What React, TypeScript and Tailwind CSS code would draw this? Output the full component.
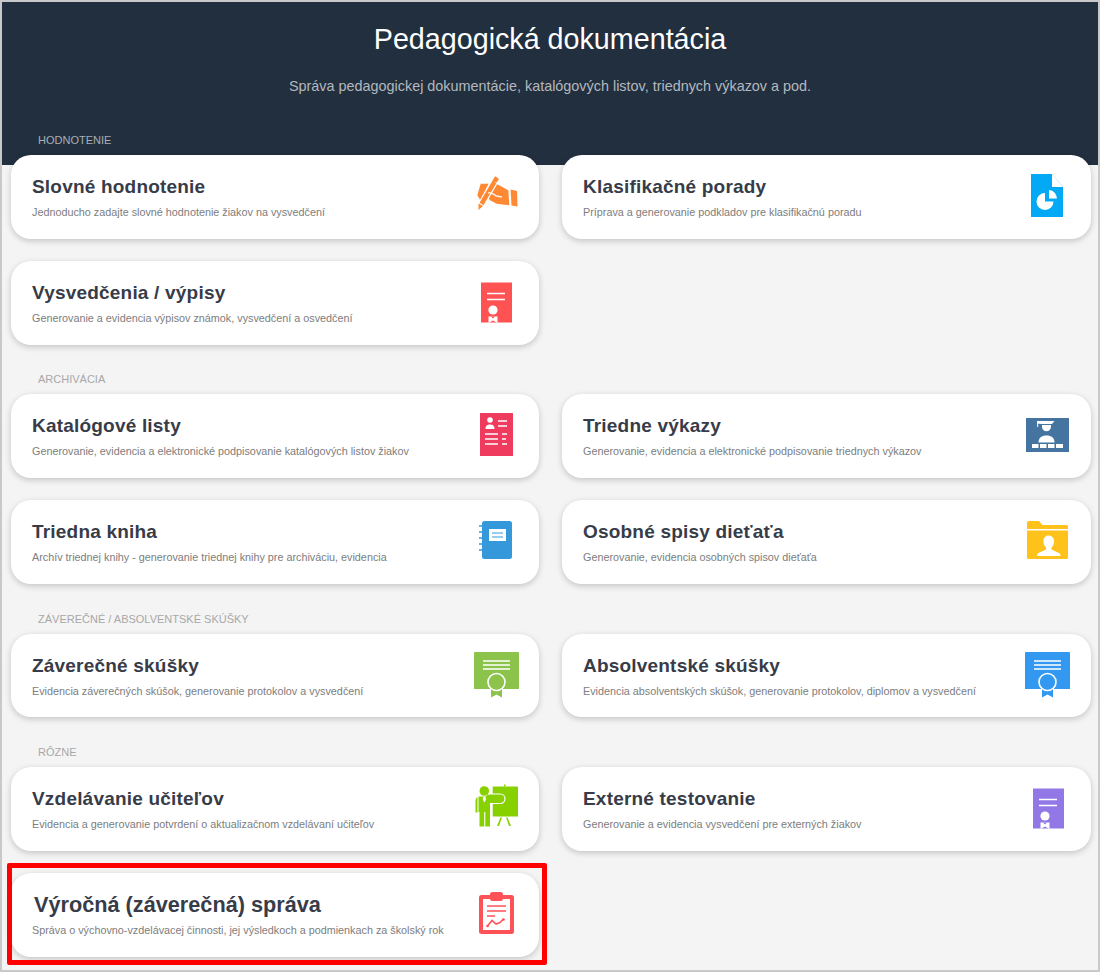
import React from "react";

const Doc = ({ c }: { c: string }) => (
  <>
    <path d="M14 9.500h31v40H14z" fill={c} />
    <path d="M20 20.500h18M20 26.500h18" stroke="#fff" strokeWidth="1.700" />
    <circle cx="26" cy="37" r="4.600" fill="#fff" />
    <path d="M21.500 43.500h9v6.500l-4.500-2.500-4.500 2.500z" fill="#fff" />
    <path d="M24 43.500h4l-2 2z" fill={c} />
  </>
);

const Cert = ({ c, x }: { c: string; x: number }) => (
  <g transform={`translate(${x} 0)`}>
    <path d="M0 7a1 1 0 0 1 1-1h43a1 1 0 0 1 1 1v36H0z" fill={c} />
    <path d="M9 15h27M9 19h27M9 23h27" stroke="#fff" strokeWidth="1.300" />
    <path d="M17 43h11v8.500l-5.500-3-5.500 3z" fill={c} />
    <circle cx="22.500" cy="36" r="8.500" fill={c} stroke="#fff" strokeWidth="1.600" />
    <path d="M16.500 43v-1M28.500 43v-1" stroke="#fff" strokeWidth="1" />
  </g>
);

const icons: Record<string, React.ReactNode> = {
  hand: (
    <>
      <path d="M26.300 15 41.300 23.300 42.300 38.300 29.700 36.700 23 33.300 18 26.700 21.300 21z" fill="#ff8833" />
      <path d="M43.500 22.500 50 24 50.500 39.500 44.500 38.500z" fill="#ff8833" />
      <path d="M13.700 16.700 21.500 16.700 15.500 29 18.500 33 14.700 35.500 10.300 28.300z" fill="#ff8833" />
      <path d="M30 10.500 14 38" stroke="#fff" strokeWidth="7" />
      <path d="M30 10.500 14.500 37" stroke="#ff8833" strokeWidth="4.500" />
      <path d="M28.500 15.500l3 1.800" stroke="#fff" strokeWidth="1" />
      <path d="M11.500 36.500 16 39 11.500 43z" fill="#ff8833" />
      <path d="M21 26c3-1 7 2 8 3l6 1" stroke="#fff" strokeWidth="1.300" fill="none" />
    </>
  ),
  chart: (
    <>
      <path d="M12 7h21l11 13v30H12z" fill="#03a9f4" />
      <path d="M33 7v13h11z" fill="#fff" />
      <path d="M26 26v8.500h8.500A8.500 8.500 0 1 1 26 26z" fill="#fff" />
      <path d="M30 23a8.500 8.500 0 0 1 8 8.500h-8z" fill="#fff" />
    </>
  ),
  docRed: <Doc c="#ff5252" />,
  catalog: (
    <>
      <rect x="13" y="7" width="33" height="43" rx="0.500" fill="#ef3b5e" />
      <circle cx="23" cy="14" r="2.800" fill="#fff" />
      <path d="M18.500 23c0-3.500 2-4.500 4.500-4.500s4.500 1 4.500 4.500z" fill="#fff" />
      <path d="M31 15h9M31 20h9M18 28h13M18 33h13M18 38h13M35 28h5M35 33h4M35 38h5" stroke="#fff" strokeWidth="1.700" />
    </>
  ),
  book: (
    <>
      <rect x="15" y="9" width="30" height="38" rx="2.500" fill="#3498db" />
      <path d="M12 14h6M12 20h6M12 26h6M12 32h6M12 38h6" stroke="#3498db" strokeWidth="1.500" />
      <rect x="22" y="17" width="17" height="12" fill="#fff" />
      <path d="M25 21h11M25 25h11" stroke="#3498db" strokeWidth="1.200" />
    </>
  ),
  teacher: (
    <>
      <rect x="7" y="12" width="43" height="34" rx="0.500" fill="#44749f" />
      <path d="M18 15h17.500l-2.500 3H22.500l-4.500-.5z" fill="#fff" />
      <path d="M18.700 15.500V21" stroke="#fff" strokeWidth="1" />
      <path d="M23 19h9v1.700a4.500 4.500 0 0 1-9 0z" fill="#fff" />
      <path d="M19.500 36.500c0-4.500 3-7 8-7s8 2.500 8 7z" fill="#fff" />
      <path d="M13 38h6.500v4H13zM21 38h6.500v4H21zM29 38h6.500v4H29zM37 38h7v4h-7z" fill="#fff" />
    </>
  ),
  folder: (
    <>
      <path d="M8 10.500A1.500 1.500 0 0 1 9.500 9H20l3.500 4H47.500A1.500 1.500 0 0 1 49 14.500V17H8z" fill="#ffc21a" />
      <path d="M8 18.500h41V45.500a1.500 1.500 0 0 1-1.500 1.500h-38A1.500 1.500 0 0 1 8 45.500z" fill="#ffc21a" />
      <path d="M29.500 23.500c3.500 0 5.500 2.500 5.500 6 0 2.500-1 4.500-2.500 6v2l7.500 3.500c1 .5 1.500 1.500 1.500 3H18c0-1.500.5-2.500 1.500-3l7.500-3.500v-2c-1.500-1.500-2.500-3.500-2.500-6 0-3.500 2-6 5-6z" fill="#fff" />
    </>
  ),
  certGreen: <Cert c="#8cc34a" x={7} />,
  certBlue: <Cert c="#3399f0" x={6} />,
  presenter: (
    <>
      <rect x="25.700" y="7.500" width="25.300" height="30" fill="#88d100" />
      <rect x="37" y="5.500" width="1.500" height="2" fill="#88d100" />
      <rect x="18" y="15" width="20" height="9.500" rx="4.700" fill="#88d100" stroke="#fff" strokeWidth="1.200" />
      <circle cx="17.300" cy="12" r="4.800" fill="#88d100" />
      <path d="M11.500 17.500H23V47.500h-4.700V33h-1.100v14.500H12.500V33h-1zM8.500 21.500A4 4 0 0 1 10.500 18V33.500H8.500z" fill="#88d100" />
      <path d="M16.500 17.500h1.800l.7 3-1.600 3-1.600-3z" fill="#fff" />
      <path d="M30 47l3.500-8.500H35L32 47zM44 47l-3.500-8.500H39L42 47z" fill="#88d100" />
    </>
  ),
  docPurple: <Doc c="#9178e6" />,
  clip: (
    <>
      <rect x="12" y="10" width="35" height="39" rx="2.500" fill="#ff5257" />
      <rect x="16" y="14" width="27" height="31" fill="#fff" />
      <rect x="23" y="7" width="13" height="9" rx="2.500" fill="#ff5257" />
      <path d="M20 21h19M20 26h19M20 31h8" stroke="#ff5257" strokeWidth="1.600" />
      <path d="M20.500 41l4.500-5.500 4 3.500 4-1.500 3.500-3.500" stroke="#ff5257" strokeWidth="1.600" fill="none" />
      <circle cx="20.500" cy="41" r="1.300" fill="#ff5257" />
      <circle cx="36.500" cy="34.500" r="1.300" fill="#ff5257" />
    </>
  ),
};

type C = { t: string; d: string; i: string; h?: string; tc?: string };

function Card({ t, d, i, h = "h-[84px]", tc = "text-[19px] tracking-[0.2px]" }: C) {
  return (
    <div className={`${h} flex items-center justify-between rounded-[20px] bg-white pl-[21px] pr-[12px] shadow-[0_2px_6px_rgba(0,0,0,0.2)]`}>
      <div className="min-w-0 pb-[1px]">
        <div className={`${tc} leading-[26px] font-bold text-[#373c48]`}>{t}</div>
        <div className="mt-[5px] text-[10.800px] leading-[14px] text-[#7d7d7d]">{d}</div>
      </div>
      <svg width="60" height="60" viewBox="0 0 60 60" className="shrink-0 overflow-visible">
        {icons[i]}
      </svg>
    </div>
  );
}

function Grid({ children }: { children: React.ReactNode }) {
  return <div className="grid grid-cols-[528px_529px] gap-x-[23px] gap-y-[22px]">{children}</div>;
}

function Label({ children, pt }: { children: React.ReactNode; pt: string }) {
  return <div className={`${pt} pb-[7px] pl-[27px] text-[11px] leading-[16px] text-[#a8a8a8] uppercase`}>{children}</div>;
}

export default function App() {
  return (
    <div className="box-border h-[972px] w-[1100px] overflow-hidden border-2 border-[#c9c9c9] bg-[#f4f4f4] font-['Liberation_Sans',Arial,sans-serif]">
      <div className="h-[163px] bg-[#222f3f] pt-[16px]">
        <h1 className="text-center text-[28.700px] leading-[42px] font-normal text-white">Pedagogická dokumentácia</h1>
        <p className="mt-[16px] text-center text-[14.400px] leading-[20px] text-[#b3b8be]">
          Správa pedagogickej dokumentácie, katalógových listov, triednych výkazov a pod.
        </p>
        <div className="mt-[36px] pl-[36px] text-[11px] leading-[16px] text-[#a9afb5] uppercase">Hodnotenie</div>
      </div>
      <div className="mt-[-10px] pl-[9px]">
        <Grid>
          <Card t="Slovné hodnotenie" d="Jednoducho zadajte slovné hodnotenie žiakov na vysvedčení" i="hand" />
          <Card t="Klasifikačné porady" d="Príprava a generovanie podkladov pre klasifikačnú poradu" i="chart" />
          <Card t="Vysvedčenia / výpisy" d="Generovanie a evidencia výpisov známok, vysvedčení a osvedčení" i="docRed" />
        </Grid>
        <Label pt="pt-[26px]">Archivácia</Label>
        <Grid>
          <Card t="Katalógové listy" d="Generovanie, evidencia a elektronické podpisovanie katalógových listov žiakov" i="catalog" />
          <Card t="Triedne výkazy" d="Generovanie, evidencia a elektronické podpisovanie triednych výkazov" i="teacher" />
          <Card t="Triedna kniha" d="Archív triednej knihy - generovanie triednej knihy pre archiváciu, evidencia" i="book" />
          <Card t="Osobné spisy dieťaťa" d="Generovanie, evidencia osobných spisov dieťaťa" i="folder" />
        </Grid>
        <Label pt="pt-[27px]">Záverečné / absolventské skúšky</Label>
        <Grid>
          <Card h="h-[83px]" t="Záverečné skúšky" d="Evidencia záverečných skúšok, generovanie protokolov a vysvedčení" i="certGreen" />
          <Card h="h-[83px]" t="Absolventské skúšky" d="Evidencia absolventských skúšok, generovanie protokolov, diplomov a vysvedčení" i="certBlue" />
        </Grid>
        <Label pt="pt-[27px]">Rôzne</Label>
        <Grid>
          <Card t="Vzdelávanie učiteľov" d="Evidencia a generovanie potvrdení o aktualizačnom vzdelávaní učiteľov" i="presenter" />
          <Card t="Externé testovanie" d="Generovanie a evidencia vysvedčení pre externých žiakov" i="docPurple" />
          <div className="relative">
            <Card t="Výročná (záverečná) správa" tc="text-[21.700px] ml-[2px]" d="Správa o výchovno-vzdelávacej činnosti, jej výsledkoch a podmienkach za školský rok" i="clip" />
            <div className="pointer-events-none absolute top-[-10px] right-[-8px] bottom-[-8px] left-[-4px] rounded-[2px] border-[5px] border-[#ff0000]" />
          </div>
        </Grid>
      </div>
    </div>
  );
}
